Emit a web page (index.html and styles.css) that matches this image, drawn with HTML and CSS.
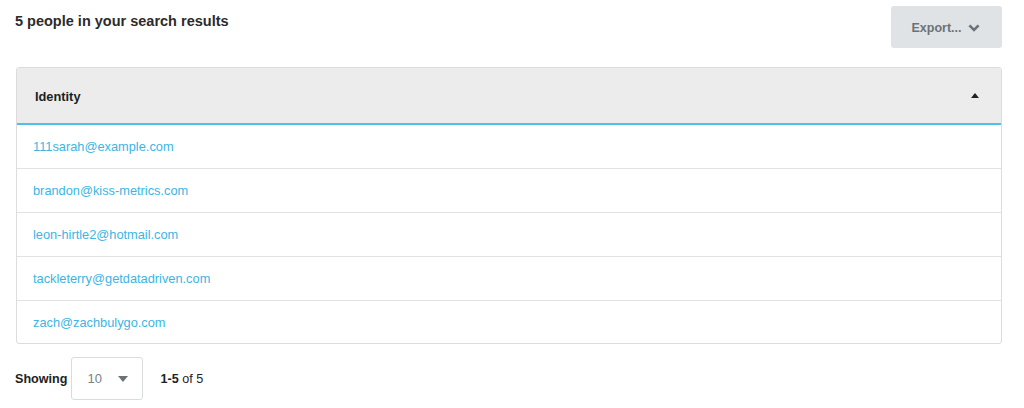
FILE: index.html
```html
<!DOCTYPE html>
<html>
<head>
<meta charset="utf-8">
<link rel="stylesheet" href="styles.css">
</head>
<body>
<div class="page">
  <div class="topbar">
    <h1 class="title">5 people in your search results</h1>
    <button class="export">Export...
      <svg class="chev" width="12" height="8" viewBox="0 0 12 8"><path d="M1.4 1.4 L6 6 L10.6 1.4" fill="none" stroke="#6b7378" stroke-width="2.6"/></svg>
    </button>
  </div>
  <div class="table">
    <div class="thead">
      <span>Identity</span>
      <svg class="sort" width="8" height="5" viewBox="0 0 8 5"><path d="M0 5 L4 0 L8 5 Z" fill="#222"/></svg>
    </div>
    <div class="row"><a href="#">111sarah@example.com</a></div>
    <div class="row"><a href="#">brandon@kiss-metrics.com</a></div>
    <div class="row"><a href="#">leon-hirtle2@hotmail.com</a></div>
    <div class="row"><a href="#">tackleterry@getdatadriven.com</a></div>
    <div class="row"><a href="#">zach@zachbulygo.com</a></div>
  </div>
  <div class="footer">
    <span class="label">Showing</span>
    <div class="select"><span>10</span>
      <svg width="10" height="6" viewBox="0 0 10 6"><path d="M0 0 L10 0 L5 6 Z" fill="#6b7378"/></svg>
    </div>
    <span class="range"><b>1-5</b> of 5</span>
  </div>
</div>
</body>
</html>
```
FILE: styles.css
```css
* { box-sizing: border-box; }
body { margin: 0; font-family: "Liberation Sans", Arial, sans-serif; color: #222; background: #fff; }
.page { padding: 6px 22px 0 15px; }
.topbar { display: flex; justify-content: space-between; align-items: flex-start; }
.title { margin: 7px 0 0 0; font-size: 14.5px; font-weight: bold; color: #2b2b2b; }
.export { width: 111px; height: 42px; border: none; border-radius: 3px; background: #dfe3e6; color: #6b7378; font-family: inherit; font-size: 12.5px; font-weight: bold; display: flex; align-items: center; justify-content: center; gap: 6px; padding: 1px 2px 0 0; }
.chev { margin-top: 1px; }
.table { margin: 19px 0 0 1px; border: 1px solid #dcdcdc; border-radius: 3px; overflow: hidden; }
.thead { height: 57px; background: #ececec; border-bottom: 2px solid #4ec0e9; display: flex; align-items: center; justify-content: space-between; padding: 2px 22px 0 18px; font-size: 12.8px; font-weight: bold; color: #1e1e1e; }
.sort { margin-top: -2px; }
.row { height: 44px; display: flex; align-items: center; padding-left: 16px; border-top: 1px solid #e2e2e2; font-size: 12.8px; }
.thead + .row { border-top: none; height: 43px; }
.row:last-child { height: 43px; }
.row a { color: #3cb5e3; text-decoration: none; }
.footer { display: flex; align-items: center; margin-top: 13px; font-size: 12.6px; }
.label { font-weight: bold; color: #222; margin-right: 4px; }
.select { width: 72px; height: 43px; border: 1px solid #d9dcde; border-radius: 3px; display: flex; align-items: center; justify-content: space-between; padding: 0 14px 0 15px; color: #7a8186; font-size: 13px; }
.range { margin-left: 17px; color: #222; }
.range b { font-weight: bold; }
```
